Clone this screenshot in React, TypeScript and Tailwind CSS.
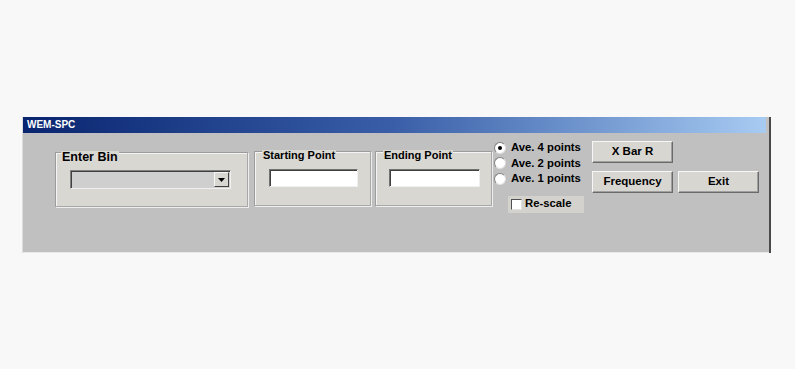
import React from "react";

const font = { fontFamily: '"Liberation Sans", Arial, sans-serif' };

function Group({ label, w, labelSize, labelLeft, children }: { label: string; w: string; labelSize: string; labelLeft: string; children: React.ReactNode }) {
  return (
    <div className={`relative ${w} h-[55px] border border-t-[#9c9c9c] border-l-[#9c9c9c] border-b-[#a8a8a8] border-r-[#a8a8a8] shadow-[inset_1px_1px_0_#f4f4f4,1px_1px_0_#eeeeee] bg-[#d9d7d2]`}>
      <span className={`absolute ${labelLeft} top-[-2px] px-[1px] bg-[#d9d7d2] font-bold ${labelSize} leading-none text-black`}>{label}</span>
      {children}
    </div>
  );
}

function Radio({ checked, label }: { checked?: boolean; label: string }) {
  return (
    <div className="flex items-center h-[15.5px] gap-[5px]">
      <span className="w-[12px] h-[12px] rounded-full bg-white border border-t-[#808080] border-l-[#808080] border-r-[#e0e0e0] border-b-[#e0e0e0] flex items-center justify-center">
        {checked && <span className="w-[4px] h-[4px] rounded-full bg-black" />}
      </span>
      <span className="font-bold text-[11.3px] leading-none text-black">{label}</span>
    </div>
  );
}

function Btn({ label, w }: { label: string; w: string }) {
  return (
    <div className={`${w} h-[22px] flex items-center justify-center bg-[#d8d6d1] border border-t-[#f6f6f6] border-l-[#f6f6f6] border-r-[#6a6a6a] border-b-[#6a6a6a] shadow-[inset_-1px_-1px_0_#a0a0a0] font-bold text-[11.5px] text-black`}>
      {label}
    </div>
  );
}

export default function App() {
  return (
    <div className="w-[795px] h-[369px] bg-[#f8f8f8] pt-[117px] pl-[22px]" style={font}>
      <div className="w-[749px] flex flex-col border-l border-l-[#dcdcdc] border-r-2 border-r-[#4a4a4a] bg-[#c0c0c0]">
        <div className="h-[16px] mr-[3px] bg-gradient-to-r from-[#0a2470] via-[#3a5fa8] to-[#a8cbf2] flex items-center pl-[4px]">
          <span className="text-white font-bold text-[10px] leading-none">WEM-SPC</span>
        </div>
        <div className="h-[120px] flex items-start pl-[32px] pt-[8px] border-b border-b-[#e8e8e8]">
          <div className="flex items-start gap-[6px] mt-[11px]">
            <Group label="Enter Bin" w="w-[193px]" labelSize="text-[12.5px]" labelLeft="left-[5px]">
              <div className="mt-[17px] ml-[14px] w-[161px] h-[19px] flex bg-[#cfcfcf] border border-t-[#808080] border-l-[#808080] border-r-[#f0f0f0] border-b-[#f0f0f0] shadow-[inset_1px_1px_0_#404040]">
                <div className="flex-1" />
                <div className="w-[15px] h-[15px] mt-[1px] mr-[1px] bg-[#d8d6d1] border border-t-[#f6f6f6] border-l-[#f6f6f6] border-r-[#404040] border-b-[#404040] flex items-center justify-center">
                  <svg width="7" height="4" viewBox="0 0 7 4"><path d="M0 0h7L3.5 4z" fill="#000" /></svg>
                </div>
              </div>
            </Group>
            <div className="flex gap-[4px] -mt-[1px]">
              <Group label="Starting Point" w="w-[117px]" labelSize="text-[11px]" labelLeft="left-[7px]">
                <div className="mt-[17px] ml-[14px] w-[89px] h-[18px] bg-white border border-t-[#707070] border-l-[#707070] border-r-[#f0f0f0] border-b-[#f0f0f0] shadow-[inset_1px_1px_0_#404040]" />
              </Group>
              <Group label="Ending Point" w="w-[117px]" labelSize="text-[11px]" labelLeft="left-[7px]">
                <div className="mt-[17px] ml-[13px] w-[91px] h-[18px] bg-white border border-t-[#707070] border-l-[#707070] border-r-[#f0f0f0] border-b-[#f0f0f0] shadow-[inset_1px_1px_0_#404040]" />
              </Group>
            </div>
          </div>
          <div className="w-[90px] flex flex-col ml-[2px] mt-[-1px]">
            <Radio checked label="Ave. 4 points" />
            <Radio label="Ave. 2 points" />
            <Radio label="Ave. 1 points" />
            <div className="mt-[9px] ml-[14px] w-[76px] h-[17px] bg-[#d4d2cd] flex items-center pl-[3px] gap-[3px]">
              <span className="w-[11px] h-[11px] bg-white border border-t-[#505050] border-l-[#505050] border-r-[#e0e0e0] border-b-[#e0e0e0]" />
              <span className="font-bold text-[11.3px] leading-none text-black">Re-scale</span>
            </div>
          </div>
          <div className="flex flex-col gap-[8px] ml-[8px]">
            <Btn label="X Bar R" w="w-[81px]" />
            <div className="flex gap-[5px]">
              <Btn label="Frequency" w="w-[81px]" />
              <Btn label="Exit" w="w-[81px]" />
            </div>
          </div>
        </div>
      </div>
    </div>
  );
}
